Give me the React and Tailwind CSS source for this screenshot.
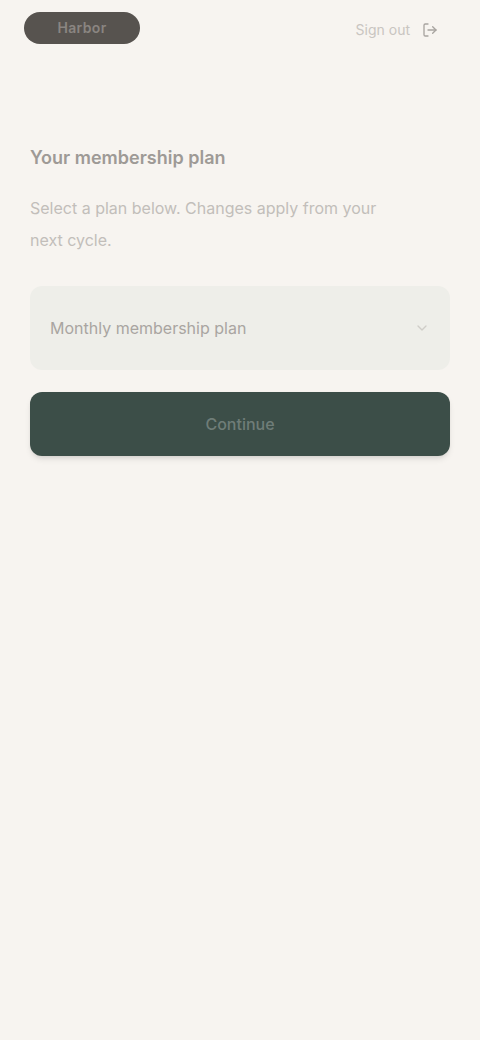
import React, { useState } from "react";
import { ChevronDown, LogOut } from "lucide-react";

const plans = ["Monthly membership plan", "Yearly membership plan", "Pause membership"];

const App = () => {
  const [plan, setPlan] = useState(plans[0]);

  return (
    <div className="min-h-[1040px] w-full bg-[#f7f4f0] font-['Inter',sans-serif] text-[#3a3836]">
      {/* top bar */}
      <header className="flex items-center justify-between px-6 pt-3">
        <div className="flex h-8 w-[116px] items-center justify-center rounded-full bg-[#57534f] text-sm font-semibold tracking-wide text-[#8a8581]">
          Harbor
        </div>
        <button className="mt-1 flex items-center gap-3 pr-[18px] text-sm text-[#c9c5c1]">
          <span>Sign out</span>
          <LogOut className="h-4 w-4 text-[#a8a4a0]" />
        </button>
      </header>

      <main className="px-[30px] pt-[100px]">
        <h1 className="text-lg font-semibold text-[#9e9a96]">Your membership plan</h1>
        <p className="mt-5 max-w-[380px] text-base leading-8 text-[#c2beba]">
          Select a plan below. Changes apply from your next cycle.
        </p>

        <label className="mt-[30px] flex h-[84px] items-center justify-between rounded-xl bg-[#eeeee9] px-5">
          <select
            value={plan}
            onChange={(e) => setPlan(e.target.value)}
            className="w-full appearance-none bg-transparent text-base text-[#a9a5a1] outline-none"
          >
            {plans.map((p) => (
              <option key={p}>{p}</option>
            ))}
          </select>
          <ChevronDown className="h-4 w-4 shrink-0 text-[#cfcdc8]" />
        </label>

        <button className="mt-[22px] flex h-[64px] w-full items-center justify-center rounded-xl bg-[#3c4e48] text-base font-medium text-[#6f7d78] shadow-md">
          Continue
        </button>
      </main>
    </div>
  );
};

export default App;
